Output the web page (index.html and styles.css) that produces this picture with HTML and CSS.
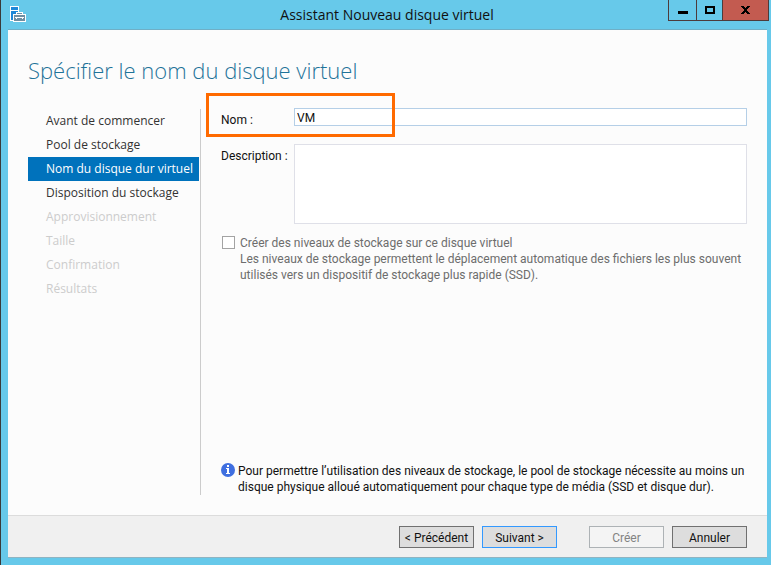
FILE: index.html
```html
<!DOCTYPE html>
<html lang="fr">
<head>
  <meta charset="utf-8">
  <title>Assistant Nouveau disque virtuel</title>
  <link rel="stylesheet" href="styles.css">
</head>
<body>
  <div class="window">
    <header class="titlebar">
      <svg class="app-icon" width="16" height="16" viewBox="0 0 16 16">
        <rect x="0.5" y="0.5" width="8" height="14" fill="#1e88d8" stroke="#fff"/>
        <rect x="1" y="4" width="7" height="1" fill="#fff"/>
        <path d="M3 16V8h3V6h7v2h3v8z" fill="#fff"/>
        <path d="M7 7h5v1h-5z" fill="#6f8fa3"/>
        <rect x="4" y="9" width="11" height="6" fill="#6f8fa3"/>
        <path d="M5 11h9v1h-1v1h-1v-1h-5v1h-1v-1h-1z" fill="#fff"/>
      </svg>
      <span class="title">Assistant Nouveau disque virtuel</span>
      <div class="controls">
        <button type="button" class="control minimize" aria-label="Réduire">
          <svg width="10" height="10" viewBox="0 0 10 10"><rect y="6" width="10" height="3"/></svg>
        </button>
        <button type="button" class="control maximize" aria-label="Agrandir">
          <svg width="10" height="8" viewBox="0 0 10 8"><rect x="1" y="1" width="8" height="6" fill="none" stroke="#000" stroke-width="2"/></svg>
        </button>
        <button type="button" class="control close" aria-label="Fermer">
          <svg width="9" height="8" viewBox="0 0 9 8" shape-rendering="crispEdges"><path d="M0 0h3v1h1v1h1v-1h1v-1h3v1h-1v1h-1v1h-1v2h1v1h1v1h1v1h-3v-1h-1v-1h-1v1h-1v1h-3v-1h1v-1h1v-1h1v-2h-1v-1h-1v-1h-1z"/></svg>
        </button>
      </div>
    </header>

    <form class="wizard">
      <h1>Spécifier le nom du disque virtuel</h1>

      <div class="content">
        <nav>
          <ul class="steps">
            <li>Avant de commencer</li>
            <li>Pool de stockage</li>
            <li class="current" aria-current="step">Nom du disque dur virtuel</li>
            <li>Disposition du stockage</li>
            <li class="pending">Approvisionnement</li>
            <li class="pending">Taille</li>
            <li class="pending">Confirmation</li>
            <li class="pending">Résultats</li>
          </ul>
        </nav>

        <section class="page">
          <div class="field">
            <label for="name">Nom :</label>
            <input type="text" id="name" value="VM">
            <div class="highlight"></div>
          </div>
          <div class="field">
            <label for="description">Description :</label>
            <textarea id="description"></textarea>
          </div>

          <div class="tiers">
            <input type="checkbox" id="tiers" disabled>
            <div>
              <label for="tiers">Créer des niveaux de stockage sur ce disque virtuel</label>
              <p>Les niveaux de stockage permettent le déplacement automatique des fichiers les plus souvent<br>utilisés vers un dispositif de stockage plus rapide (SSD).</p>
            </div>
          </div>

          <div class="note">
            <svg width="14" height="14" viewBox="0 0 14 14">
              <circle cx="7" cy="7" r="7" fill="#3f6fe0"/>
              <path d="M6 2h2v2H6zM5 5h3v5h1v1H5v-1h1V6H5z" fill="#fff"/>
            </svg>
            <p>Pour permettre l’utilisation des niveaux de stockage, le pool de stockage nécessite au moins un<br>disque physique alloué automatiquement pour chaque type de média (SSD et disque dur).</p>
          </div>
        </section>
      </div>

      <footer class="actions">
        <button type="button">&lt; Précédent</button>
        <button type="submit" class="default">Suivant &gt;</button>
        <button type="button" class="create" disabled>Créer</button>
        <button type="button">Annuler</button>
      </footer>
    </form>
  </div>
</body>
</html>
```

FILE: styles.css
```css
* {
  box-sizing: border-box;
}

body {
  margin: 0;
  font-family: Roboto, "Noto Sans", sans-serif;
  font-size: 12px;
  line-height: 16px;
  color: #111;
}

h1, p, ul {
  margin: 0;
  padding: 0;
}

button, input, textarea {
  font: inherit;
  color: inherit;
  margin: 0;
}

.window {
  display: flex;
  flex-direction: column;
  min-height: 100vh;
  padding: 0 4px 7px 7px;
  background-color: #67c9ea;
  border-left: 1px solid #3a3a3a;
}

/* title bar */

.titlebar {
  display: flex;
  align-items: flex-start;
  height: 29px;
  margin-right: -2px;
}

.app-icon {
  margin: 6px 0 0 2px;
  width: 16px;
}

.title {
  flex: 1;
  padding-left: 80px;
  text-align: center;
  font-family: "Open Sans", sans-serif;
  font-size: 14px;
  line-height: 30px;
}

.controls {
  display: flex;
}

.control {
  display: flex;
  align-items: center;
  justify-content: center;
  width: 29px;
  height: 21px;
  padding: 0;
  background-color: #67c9ea;
  border: 1px solid #4d3b3b;
  border-top: none;
}

.maximize {
  width: 27px;
  margin: 0 -1px;
}

.close {
  width: 47px;
  background-color: #c35b50;
}

/* wizard */

.wizard {
  display: flex;
  flex-direction: column;
  flex: 1;
  background-color: #fcfcfc;
  border-top: 1px solid #6fafc6;
  border-bottom: 1px solid #8fb4c2;
}

h1 {
  padding: 24px 20px 22px;
  font-family: "Open Sans", sans-serif;
  font-size: 22px;
  font-weight: 300;
  line-height: 32px;
  color: #1f7399;
}

.content {
  display: flex;
  flex: 1;
  padding: 0 20px 20px;
}

nav {
  flex: none;
  padding-top: 1px;
}

.steps {
  width: 173px;
  height: 100%;
  padding-right: 1px;
  border-right: 1px solid #ccc;
  list-style: none;
  font-family: "Open Sans", sans-serif;
  line-height: 24px;
}

.steps li {
  padding-left: 18px;
  white-space: nowrap;
  color: #333;
}

.steps .current {
  background-color: #0072bc;
  color: #fff;
}

.steps .pending {
  color: #ccc;
}

.page {
  display: flex;
  flex-direction: column;
  flex: 1;
  min-width: 0;
  padding-left: 20px;
}

.field {
  position: relative;
  display: flex;
  align-items: flex-start;
  margin-bottom: 18px;
}

.field label {
  width: 73px;
  padding-top: 4px;
  white-space: nowrap;
}

.field input,
.field textarea {
  flex: 1;
  min-width: 0;
  height: 18px;
  padding: 1px 2px 0;
  background-color: #fff;
  border: 1px solid #b5cfe7;
  border-radius: 0;
}

.field textarea {
  height: 80px;
  border-color: #dfe0e8;
  resize: none;
}

.field:first-child {
  height: 18px;
}

.highlight {
  position: absolute;
  top: -15px;
  left: -15px;
  width: 189px;
  height: 44px;
  border: 3px solid #ff6a00;
  pointer-events: none;
}

.tiers {
  display: flex;
  gap: 5px;
  margin-top: -7px;
  color: #6d6d6d;
}

.tiers input {
  appearance: none;
  flex: none;
  width: 13px;
  height: 13px;
  margin: 1px 0 0 1px;
  background-color: #fff;
  border: 1px solid #a3a3a3;
}

.note {
  display: flex;
  gap: 3px;
  margin-top: auto;
}

.note svg {
  flex: none;
}

/* footer */

.actions {
  display: flex;
  justify-content: flex-end;
  gap: 8px;
  padding: 10px 20px 9px;
  background-color: #f0f0f0;
  border-top: 1px solid #dcdcdc;
}

.actions button {
  width: 75px;
  height: 22px;
  padding: 2px 0 0;
  background-color: #ddd;
  border: 1px solid #707070;
  white-space: nowrap;
}

.actions .default {
  border-color: #3399ff;
}

.actions .create {
  margin-left: 24px;
  background-color: #f4f4f4;
  border-color: #adb2b5;
  color: #838383;
}
```
